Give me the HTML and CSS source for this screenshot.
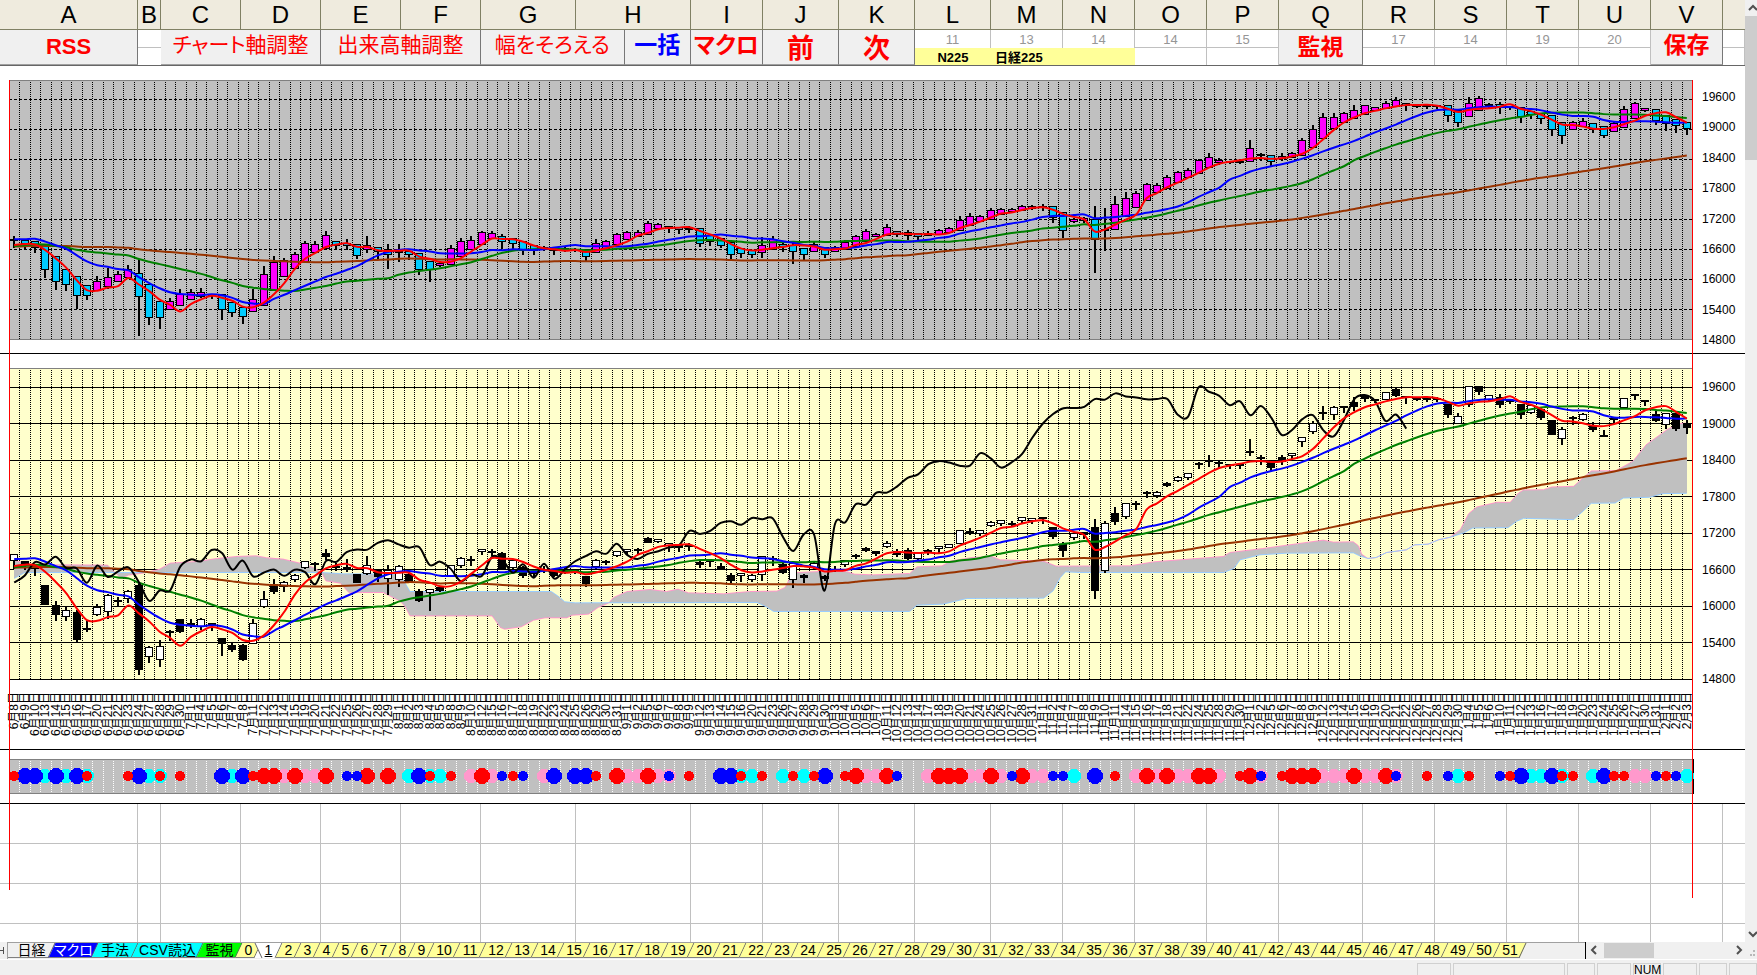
FILE: index.html
```html
<!DOCTYPE html>
<html lang="ja">

<head>
    <meta charset="UTF-8">
    <meta name="viewport" content="width=device-width, initial-scale=1.0">
    <title>日経225</title>
    <link rel="stylesheet" href="styles.css">
</head>

<body>
    <div class="book">
        <div class="sheet">
            <div class="cols head" id="head"></div>

            <div class="cols toolbar">
                <button class="tool rss">RSS</button>
                <span class="cell b"></span>
                <button class="tool thin wide">チャート軸調整</button>
                <button class="tool thin wide">出来高軸調整</button>
                <div class="pair">
                    <button class="tool thin fit">幅をそろえる</button>
                    <button class="tool blue all">一括</button>
                </div>
                <button class="tool">マクロ</button>
                <button class="tool big">前</button>
                <button class="tool big">次</button>
                <span class="cell code"><i>11</i><b>N225</b></span>
                <span class="cell code name"><i>13</i><b>日経225</b></span>
                <span class="cell code"><i>14</i><b></b></span>
                <span class="cell"><i>14</i><b></b></span>
                <span class="cell"><i>15</i><b></b></span>
                <button class="tool low">監視</button>
                <span class="cell"><i>17</i><b></b></span>
                <span class="cell"><i>14</i><b></b></span>
                <span class="cell"><i>19</i><b></b></span>
                <span class="cell"><i>20</i><b></b></span>
                <button class="tool">保存</button>
                <span class="cell"><i></i><b></b></span>
            </div>

            <div class="charts">
                <div class="panel average">
                    <svg class="plot" id="average"></svg>
                    <div class="scale" id="scale1"></div>
                </div>
                <div class="panel candle">
                    <svg class="plot" id="candle"></svg>
                    <div class="scale" id="scale2"></div>
                    <svg class="dates" id="dates"></svg>
                </div>
                <div class="panel signal">
                    <svg class="plot" id="signal"></svg>
                </div>
                <div class="mark left"></div>
                <div class="mark right"></div>
            </div>

            <div class="cols empty" id="empty"></div>
        </div>

        <div class="vscroll">
            <button aria-label="上へ"><svg viewBox="0 0 16 16"><path d="M4 10l4-4 4 4" /></svg></button>
            <div class="thumb"></div>
            <button aria-label="下へ"><svg viewBox="0 0 16 16"><path d="M4 6l4 4 4-4" /></svg></button>
        </div>
    </div>

    <div class="bottom">
        <button class="nav" aria-label="最後のシート"><svg viewBox="0 0 7 15"><path d="M0 7.500h3M3.500 4v7" /></svg></button>
        <div class="tabs" id="tabs">
            <button class="tab t1"><span>日経</span></button>
            <button class="tab t2"><span>マクロ</span></button>
            <button class="tab t3"><span>手法</span></button>
            <button class="tab t4"><span>CSV読込</span></button>
            <button class="tab t5"><span>監視</span></button>
        </div>
        <div class="hscroll">
            <button aria-label="左へ"><svg viewBox="0 0 16 16"><path d="M10 4l-4 4 4 4" /></svg></button>
            <div class="thumb"></div>
            <button aria-label="右へ"><svg viewBox="0 0 16 16"><path d="M6 4l4 4-4 4" /></svg></button>
        </div>
        <svg class="grip" viewBox="0 0 10 16"><path d="M6 9h2M3 13h2M6 13h2" /></svg>
    </div>

    <div class="status">
        <span class="s34"></span>
        <span class="s112"></span>
        <span class="s28"></span>
        <span class="s34"></span>
        <span class="s28">NUM</span>
        <span class="s34"></span>
        <span class="s28"></span>
        <span class="s28"></span>
    </div>

    <script src="script.js"></script>
</body>

</html>
```

FILE: styles.css
```css
* {
    box-sizing: border-box;
}

body {
    margin: 0;
    height: 100vh;
    display: flex;
    flex-direction: column;
    overflow: hidden;
    background-color: #fff;
    color: #000;
    font-family: "Liberation Sans", "Noto Sans CJK JP", sans-serif;
    font-feature-settings: "palt";
}

button {
    font: inherit;
    font-feature-settings: inherit;
    border: none;
    padding: 0;
    cursor: pointer;
}

i,
b {
    font-style: normal;
    font-weight: normal;
}

.book {
    flex: 1;
    min-height: 0;
    display: flex;
}

.sheet {
    flex: 1;
    min-width: 0;
    display: flex;
    flex-direction: column;
}

/* One column set for the header, the buttons and the cells */
.cols {
    display: grid;
    grid-template-columns: 138fr 23fr 80fr 80fr 80fr 80fr 95fr 115fr 72fr 76fr 76fr 76fr 72fr 72fr 72fr 72fr 84fr 72fr 72fr 72fr 72fr 72fr 22fr;
}

.head {
    height: 30px;
    background-color: #efebde;
    border-bottom: 1px solid #808064;
    font-size: 24px;
    line-height: 30px;
    text-align: center;
}

.head span {
    border-right: 1px solid #808064;
    min-width: 0;
}

.head span:last-child {
    border-right: none;
}

.toolbar {
    height: 36px;
    border-bottom: 1px solid #666;
}

.tool {
    background-color: #f0f0f0;
    border-right: 1px solid #777;
    border-bottom: 1px solid #a0a0a0;
    color: #f00;
    font-size: 23px;
    font-weight: bold;
    line-height: 28px;
    white-space: nowrap;
    min-width: 0;
    padding-bottom: 4px;
}

.thin {
    font-size: 21px;
    font-weight: normal;
}

.wide {
    grid-column: span 2;
}

.pair {
    grid-column: span 2;
    display: flex;
}

.fit {
    flex: 144;
}

.all {
    flex: 66;
}

.blue {
    color: #00f;
}

.big {
    font-size: 27px;
    padding: 4px 0 0;
}

.low {
    padding: 0;
}

.rss {
    font-size: 22px;
    padding: 0;
}

.cell {
    display: grid;
    grid-template-rows: 18px 17px;
    border-right: 1px solid #c0c0c0;
    text-align: center;
}

.cell i {
    border-bottom: 1px solid #c0c0c0;
    color: #969696;
    font-size: 13px;
    line-height: 20px;
}

.cell b {
    font-size: 13px;
    font-weight: bold;
    line-height: 20px;
}

.b {
    background: linear-gradient(#c0c0c0, #c0c0c0) 0 17px / 100% 1px no-repeat;
    border-right: none;
}

.code {
    border-right: none;
}

.code i {
    border-bottom: none;
    border-right: 1px solid #c0c0c0;
}

.code b {
    background-color: #ff9;
}

.name b {
    text-align: left;
    padding-left: 4px;
}

.charts {
    position: relative;
}

.panel {
    display: grid;
    grid-template-columns: 1fr 53px;
    padding-left: 9px;
    border-bottom: 1px solid #000;
}

.average {
    height: 288px;
    padding-top: 14px;
}

.candle {
    height: 396px;
    padding-top: 14px;
    grid-template-rows: 312px 1fr;
}

.signal {
    height: 54px;
    padding-top: 9px;
}

.plot {
    display: block;
    width: 100%;
    height: 311px;
    overflow: visible;
    shape-rendering: crispEdges;
}

.average .plot {
    height: 259px;
}

.signal .plot {
    height: 35px;
}

.dates {
    width: 100%;
    height: 68px;
    overflow: visible;
    font-size: 12px;
    font-feature-settings: normal;
}

.scale {
    display: flex;
    flex-direction: column;
    justify-content: space-between;
    padding-left: 10px;
    font-size: 12px;
    line-height: 12px;
}

.average .scale {
    height: 266px;
    padding-top: 11px;
}

.candle .scale {
    height: 317px;
    padding-top: 13px;
}

.mark {
    position: absolute;
    top: 14px;
    width: 1px;
    height: 810px;
    background-color: #f00;
}

.left {
    left: 9px;
}

.right {
    right: 52px;
    height: 818px;
}

/* Chart parts */
.bg-average,
.bg-signal,
.cloud {
    fill: #c0c0c0;
}

.bg-candle {
    fill: #ffc;
}

.line {
    fill: none;
    stroke-width: 2;
    shape-rendering: auto;
}

.ma5 {
    stroke: #f00;
}

.ma13 {
    stroke: #00f;
}

.ma25 {
    stroke: #008000;
}

.ma75 {
    stroke: #930;
}

.chikou {
    stroke: #000;
}

.span-a {
    stroke: #f9c;
    stroke-width: 1;
}

.span-b {
    stroke: #9cf;
    stroke-width: 1;
}

.grid-v {
    stroke: #000;
    stroke-dasharray: 1 1;
}

.grid-w {
    stroke: #fff;
    stroke-dasharray: 1 1;
}

.grid-h {
    stroke: #000;
}

.grid-d {
    stroke: #000;
    stroke-dasharray: 3 2;
}

.frame {
    stroke: #808080;
}

.wick {
    stroke: #000;
    stroke-width: 2;
}

.body {
    stroke: #000;
}

.average .up {
    fill: #f0f;
}

.average .down {
    fill: #0cf;
}

.candle .up {
    fill: #fff;
}

.candle .down {
    fill: #000;
}

.red {
    fill: #f00;
}

.navy {
    fill: #00f;
}

.cyan {
    fill: #0ff;
}

.pink {
    fill: #f9c;
}

.empty {
    flex: 1;
    min-height: 0;
    background: repeating-linear-gradient(#fff 0 39px, #c0c0c0 39px 40px);
}

.empty span {
    border-right: 1px solid #c0c0c0;
}

.empty span:last-child {
    border-right: none;
}

/* Scroll bars */
.vscroll {
    width: 12px;
    display: flex;
    flex-direction: column;
    background-color: #f0f0f0;
    overflow: hidden;
}

.vscroll button,
.hscroll button {
    width: 16px;
    height: 16px;
    background: none;
    flex: none;
}

.vscroll svg,
.hscroll svg,
.nav svg,
.grip {
    display: block;
    fill: none;
    stroke: #505050;
    stroke-width: 2;
}

.vscroll .thumb {
    height: 144px;
    margin-bottom: auto;
    background-color: #cdcdcd;
}

.bottom {
    height: 17px;
    display: flex;
    background-color: #f0f0f0;
    font-size: 14px;
}

.nav {
    width: 8px;
    background: none;
    border-right: 1px solid #a0a0a0;
}

.nav svg {
    width: 7px;
    height: 15px;
    stroke-width: 1;
}

.tabs {
    flex: 1;
    display: flex;
    height: 16px;
    padding-left: 3px;
    border-top: 1px solid #a0a0a0;
    overflow: hidden;
}

.tab {
    position: relative;
    width: 26px;
    height: 15px;
    background: none;
    line-height: 15px;
    white-space: nowrap;
    flex: none;
    color: #000;
    --tab: #ff9;
}

.tab::before {
    content: "";
    position: absolute;
    inset: 0;
    background-color: var(--tab);
    border-right: 1px solid #606060;
    border-bottom: 1px solid #808080;
    transform: skewX(-25deg);
}

.tab span {
    position: relative;
}

.one {
    width: 19px;
}

.t1 {
    width: 41px;
    --tab: #f0f0f0;
}

.t2 {
    width: 43px;
    color: #fff;
    --tab: #00f;
}

.t3 {
    width: 40px;
    --tab: #0ff;
}

.t4 {
    width: 65px;
    --tab: #0ff;
}

.t5 {
    width: 39px;
    --tab: #0f0;
}

.active {
    width: 21px;
    --tab: #fff;
}

.active::before {
    border-bottom: none;
}

.active::after {
    content: "";
    position: absolute;
    inset: 0 8px 0 0;
    background-color: #fff;
    border-left: 1px solid #606060;
    transform: skewX(25deg);
}

.active span {
    z-index: 1;
    text-decoration: underline;
}

.hscroll {
    width: 162px;
    display: flex;
    border-left: 1px solid #000;
}

.hscroll .thumb {
    width: 50px;
    height: 15px;
    margin: 1px auto 0 2px;
    background-color: #cdcdcd;
}

.grip {
    width: 10px;
    height: 16px;
    stroke: #b8b8b8;
}

.status {
    height: 16px;
    display: flex;
    justify-content: flex-end;
    gap: 2px;
    padding-top: 3px;
    background-color: #f0f0f0;
    border-top: 1px solid #fff;
    font-size: 12px;
    line-height: 12px;
    text-align: center;
}

.status span {
    height: 12px;
    border: 1px solid #d0d0d0;
    border-bottom: none;
}

.s28 {
    width: 28px;
}

.s34 {
    width: 34px;
}

.s112 {
    width: 112px;
}
```

FILE: script.js
```js
const SVG = "http://www.w3.org/2000/svg"

const months = {
    6: "8 9 10 13 14 15 16 17 20 21 22 23 24 27 28 29 30",
    7: "1 4 5 6 7 8 11 12 13 14 15 19 20 21 22 25 26 27 28 29",
    8: "1 2 3 4 5 8 9 10 12 15 16 17 18 19 22 23 24 25 26 29 30 31",
    9: "1 2 5 6 7 8 9 12 13 14 15 16 20 21 23 26 27 28 29 30",
    10: "3 4 5 6 7 11 12 13 14 17 18 19 20 21 24 25 26 27 28 31",
    11: "1 2 4 7 8 9 10 11 14 15 16 17 18 21 22 24 25 28 29 30",
    12: "1 2 5 6 7 8 9 12 13 14 15 16 19 20 21 22 26 27 28 29 30",
    1: "4 5 6 10 11 12 13 16 17 18 19 20 23 24 25 26 27 30 31",
    2: "1 2 3"
}

// Closes before the first day, for the moving averages
const before = [
    16197, 15967, 16111, 16052, 15916, 16140, 16188, 16027, 16086, 16747, 16960, 17015, 16911, 16783, 16642,
    16852, 16939, 17234, 17117, 16974, 16936, 16725, 17049, 17001, 16892, 17003, 17134, 17104, 16879, 16759,
    16164, 16123, 15733, 15715, 15750, 15822, 15751, 15929, 16381, 16911, 16848, 16276, 16874, 16907, 17364,
    17572, 17439, 17353, 17290, 16666, 16147, 16107, 16216, 16565, 16579, 16646, 16412, 16466, 16653, 16645,
    16647, 16736, 16655, 16499, 16757, 16772, 16835, 17068, 17235, 16956, 16563, 16642, 16580, 16675
]

// open, high, low, close
const days = [
    [16740, 16830, 16600, 16831], [16720, 16740, 16590, 16668], [16640, 16690, 16500, 16601],
    [16325, 16330, 16010, 16019], [16000, 16080, 15760, 15859], [15820, 15990, 15750, 15920],
    [15880, 15930, 15395, 15434], [15630, 15770, 15580, 15600], [15850, 16040, 15840, 15965],
    [15895, 16200, 15780, 16169], [16090, 16150, 15990, 16066], [16120, 16270, 16050, 16238],
    [16333, 16389, 14865, 14952], [15165, 15340, 15070, 15309], [15115, 15440, 14990, 15323],
    [15550, 15610, 15420, 15567], [15765, 15790, 15560, 15576],
    [15700, 15780, 15640, 15682], [15660, 15800, 15610, 15776], [15700, 15700, 15590, 15669],
    [15460, 15460, 15180, 15379], [15350, 15410, 15240, 15276], [15345, 15370, 15100, 15107],
    [15370, 15790, 15390, 15709], [15985, 16240, 15960, 16096], [16340, 16450, 16190, 16231],
    [16310, 16410, 16235, 16386], [16420, 16530, 16400, 16498], [16630, 16740, 16600, 16723],
    [16690, 16730, 16570, 16682], [16860, 16940, 16750, 16810], [16640, 16700, 16580, 16627],
    [16620, 16780, 16560, 16620], [16510, 16520, 16380, 16383], [16530, 16830, 16510, 16665],
    [16580, 16600, 16390, 16477], [16440, 16680, 16180, 16569],
    [16430, 16680, 16320, 16636], [16510, 16540, 16370, 16391], [16230, 16280, 16060, 16083],
    [16220, 16270, 15920, 16255], [16290, 16330, 16230, 16254], [16500, 16660, 16490, 16651],
    [16650, 16800, 16630, 16765], [16750, 16830, 16650, 16735], [16890, 16940, 16840, 16920],
    [16890, 16940, 16820, 16870], [16850, 16880, 16590, 16597], [16620, 16780, 16570, 16746],
    [16620, 16660, 16460, 16486], [16540, 16600, 16470, 16546], [16590, 16650, 16540, 16598],
    [16560, 16600, 16470, 16497], [16560, 16620, 16530, 16597], [16580, 16610, 16530, 16556],
    [16480, 16500, 16320, 16361], [16640, 16770, 16600, 16737], [16720, 16760, 16680, 16725],
    [16830, 16890, 16800, 16887],
    [16890, 16940, 16850, 16927], [16900, 16950, 16850, 16926], [17100, 17130, 17030, 17038],
    [17050, 17100, 17030, 17082], [16990, 17020, 16890, 17012], [16980, 17000, 16880, 16959],
    [16990, 17040, 16900, 16966], [16700, 16740, 16630, 16673], [16740, 16780, 16640, 16729],
    [16640, 16700, 16600, 16614], [16500, 16540, 16380, 16405], [16490, 16550, 16400, 16519],
    [16420, 16530, 16400, 16492], [16510, 16820, 16410, 16808], [16770, 16830, 16660, 16754],
    [16680, 16730, 16530, 16545], [16430, 16690, 16290, 16684], [16490, 16530, 16370, 16465],
    [16620, 16720, 16610, 16694], [16480, 16510, 16410, 16450],
    [16570, 16650, 16560, 16599], [16670, 16750, 16640, 16736], [16830, 16850, 16770, 16819],
    [16940, 16970, 16890, 16899], [16880, 16900, 16820, 16860], [16970, 17070, 16960, 17025],
    [16880, 16930, 16810, 16840], [16900, 16950, 16750, 16774], [16780, 16880, 16760, 16856],
    [16880, 16930, 16840, 16900], [16930, 16980, 16870, 16964], [16960, 17010, 16950, 16999],
    [17020, 17240, 17020, 17236], [17210, 17290, 17160, 17185], [17190, 17250, 17150, 17234],
    [17310, 17390, 17300, 17365], [17340, 17400, 17310, 17392], [17350, 17390, 17310, 17336],
    [17390, 17450, 17370, 17446], [17390, 17450, 17350, 17425],
    [17430, 17470, 17340, 17442], [17280, 17290, 17100, 17135], [17000, 17050, 16800, 16905],
    [17120, 17200, 17090, 17177], [17200, 17220, 17100, 17171], [17280, 17430, 16110, 16252],
    [16570, 17390, 16550, 17344], [17520, 17620, 17330, 17375], [17460, 17700, 17430, 17673],
    [17680, 17720, 17580, 17668], [17850, 17890, 17780, 17862], [17810, 17890, 17780, 17863],
    [18010, 18040, 17960, 17967], [18050, 18130, 18030, 18106], [18110, 18190, 18070, 18163],
    [18340, 18370, 18260, 18333], [18390, 18480, 18280, 18381], [18340, 18380, 18250, 18357],
    [18310, 18330, 18260, 18307], [18320, 18350, 18260, 18308],
    [18530, 18746, 18460, 18513], [18430, 18480, 18320, 18426], [18355, 18380, 18220, 18275],
    [18430, 18480, 18320, 18361], [18460, 18497, 18420, 18497], [18700, 18780, 18620, 18765],
    [18860, 19040, 18830, 18996], [19180, 19280, 19050, 19155], [19140, 19280, 19050, 19251],
    [19270, 19284, 19180, 19254], [19330, 19430, 19210, 19274], [19430, 19440, 19350, 19401],
    [19370, 19400, 19330, 19392], [19390, 19510, 19380, 19495], [19550, 19590, 19430, 19444],
    [19440, 19430, 19320, 19428], [19400, 19410, 19370, 19397], [19380, 19450, 19360, 19403],
    [19400, 19440, 19360, 19402], [19301, 19301, 19090, 19145], [18997, 19176, 18991, 19114],
    [19298, 19594, 19277, 19594], [19602, 19615, 19470, 19521], [19393, 19472, 19354, 19454],
    [19414, 19484, 19255, 19301], [19360, 19402, 19325, 19365], [19300, 19300, 19070, 19135],
    [19174, 19299, 19156, 19287], [19219, 19255, 19061, 19095], [19038, 19043, 18812, 18814],
    [18753, 18941, 18650, 18894], [19082, 19122, 18982, 19072], [19060, 19176, 19039, 19138],
    [18938, 19024, 18867, 18891], [18794, 18895, 18783, 18788], [19067, 19092, 19005, 19058],
    [19261, 19405, 19260, 19402], [19455, 19487, 19389, 19467], [19368, 19370, 19295, 19369],
    [19147, 19200, 19030, 19041],
    [18968, 19170, 18916, 19148], [19150, 19160, 18870, 18915], [18990, 19050, 18830, 18918]
]

// Cloud edges as day number and price
const spanA = [
    [0, 16748], [2, 16671], [4, 16677], [9, 16671], [9.7, 16550], [10.3, 16457], [11, 16507], [12.7, 16550],
    [14, 16605], [15, 16704], [17.6, 16731], [19.5, 16780], [21.4, 16814], [23.3, 16825], [24.3, 16792],
    [25.9, 16770], [27.5, 16704], [28.8, 16633], [29.6, 16550], [30, 16414], [31.4, 16375], [32.2, 16222],
    [35.5, 16222], [37.1, 16085], [37.6, 16000], [38.1, 15838], [46, 15838], [46.8, 15647], [47.2, 15619],
    [48.8, 15658], [50, 15767], [51.1, 15806], [53.2, 15806], [53.7, 15849], [55.3, 15866], [56.2, 15975],
    [57.2, 16047], [57.7, 16140], [59, 16238], [61.2, 16271], [62.8, 16238], [63.9, 16277], [64.9, 16216],
    [68.3, 16200], [70.8, 16238], [73.4, 16244], [74.2, 16304], [74.7, 16468], [75.3, 16550], [77.6, 16567],
    [80.1, 16567], [80.9, 16523], [82.7, 16512], [86.2, 16534], [86.9, 16644], [89.3, 16660], [90.2, 16742],
    [92.2, 16797], [94.1, 16814], [94.9, 16759], [99.1, 16737], [100.3, 16655], [107.4, 16660], [109.7, 16726],
    [116.4, 16814], [117, 16879], [120.2, 16945], [126, 17082], [127, 17049], [128.9, 17055], [129.4, 16989],
    [129.7, 16852], [130.3, 16781], [131.1, 16797], [132.1, 16879], [134, 16923], [134.8, 17005], [136.1, 17016],
    [137.1, 17088], [138.2, 17129], [139.2, 17255], [140, 17518], [140.8, 17628], [142.7, 17704], [144, 17704],
    [144.8, 17858], [145.3, 17907], [147.2, 17912], [148, 17956], [150.1, 17967], [151, 18104], [151.8, 18219],
    [154.2, 18225], [155.8, 18378], [157.1, 18652], [159.1, 18899], [160.2, 18997], [161, 19008]
]
const spanB = [
    [0, 16452], [1, 16550], [29.6, 16550], [31.7, 16529], [37.1, 16523], [37.6, 16386], [38.1, 16238],
    [51.7, 16238], [52.4, 16156], [53, 16069], [54, 16052], [71.5, 16058], [72.4, 15986], [73.1, 15910],
    [86.2, 15910], [86.9, 16014], [89.4, 16030], [91.7, 16123], [99.1, 16129], [100, 16249], [100.7, 16468],
    [101.2, 16562], [102.6, 16550], [116.4, 16550], [117.4, 16616], [118, 16759], [119.9, 16841],
    [122.5, 16868], [128.9, 16874], [129.5, 16825], [130.3, 16781], [131.1, 16797], [132.1, 16879],
    [134, 16923], [134.8, 17005], [136.1, 17016], [137.1, 17088], [138.2, 17129], [139.5, 17200],
    [140.4, 17282], [143.8, 17288], [144.6, 17392], [145.3, 17441], [150.1, 17419], [151, 17556],
    [151.8, 17688], [154.1, 17693], [154.9, 17775], [157.4, 17786], [158.7, 17847], [161, 17852]
]

// R B: large, c p: middle, r b: small, x: c with r, y: p with b
const signals = "rBBcBcBx...rBcx.r...BcBrRRpRppR.bbR.R.cBxcr.pRpbrb.pB.BBr.RppRpy.r..BB" +
    "xcr.crcrB.rRppRb..pRRRppRpbRppbbc.B.r.pRpRppRRp.rRy.rRRRpppRppRy..r.bcr..brBccBxr.cBrrppbrbc"

const count = days.length
const closes = before.concat(days.map(d => d[3]))

const average = n => days.map((d, i) => {
    const end = before.length + i + 1
    return [i, closes.slice(end - n, end).reduce((a, b) => a + b) / n]
})

// Averaged candles for the upper chart
const averaged = () => {
    let open = days[0][0]
    let close = days[0][3]
    return days.map(([o, h, l, c], i) => {
        if (i > 0) open = (open + close) / 2
        close = (o + h + l + c) / 4
        return [open, Math.max(h, open, close), Math.min(l, open, close), close]
    })
}

const add = (svg, name, attrs, text) => {
    const el = document.createElementNS(SVG, name)
    for (const key in attrs) el.setAttribute(key, attrs[key])
    if (text) el.textContent = text
    svg.appendChild(el)
}

const curve = pts => {
    let d = `M${pts[0]}`
    for (let i = 0; i < pts.length - 1; i++) {
        const p0 = pts[i - 1] || pts[i]
        const p1 = pts[i]
        const p2 = pts[i + 1]
        const p3 = pts[i + 2] || p2
        d += `C${p1[0] + (p2[0] - p0[0]) / 6} ${p1[1] + (p2[1] - p0[1]) / 6} `
        d += `${p2[0] - (p3[0] - p1[0]) / 6} ${p2[1] - (p3[1] - p1[1]) / 6} ${p2[0]} ${p2[1]}`
    }
    return d
}

function drawPrices(id, top, data, gridClass, gridTop) {
    const svg = document.getElementById(id)
    svg.innerHTML = ""
    const w = svg.clientWidth
    const h = svg.clientHeight
    const step = w / count
    const x = i => (i + 0.5) * step
    const y = v => h - (v - 14800) / (top - 14800) * h
    const points = list => list.map(([i, v]) => [x(i), y(v)])

    add(svg, "rect", { class: "bg-" + id, width: w, height: h })
    for (let i = 1; i < count; i++) {
        const gx = Math.round(i * step) + 0.5
        add(svg, "path", { class: "grid-v", d: `M${gx} 0V${h}` })
    }
    for (let v = 15400; v <= 19600; v += 600) {
        const gy = Math.round(h - (v - 14800) / (gridTop - 14800) * h) + 0.5
        add(svg, "path", { class: gridClass, d: `M0 ${gy}H${w}` })
    }
    add(svg, "path", { class: "frame", d: `M0 0.5H${w}` })
    add(svg, "path", { class: id === "candle" ? "grid-h" : "frame", d: `M0 ${h + 0.5}H${w}` })

    if (id === "candle") {
        const a = points(spanA)
        const b = points(spanB)
        add(svg, "path", { class: "cloud", d: `M${a.join("L")}L${b.slice().reverse().join("L")}Z` })
        add(svg, "path", { class: "line span-a", d: `M${a.join("L")}` })
        add(svg, "path", { class: "line span-b", d: `M${b.join("L")}` })
    }

    data.forEach(([o, hi, lo, c], i) => {
        const cx = Math.round(x(i))
        const t = Math.round(y(Math.max(o, c)))
        const b = Math.round(y(Math.min(o, c)))
        add(svg, "path", { class: "wick", d: `M${cx} ${y(hi)}V${y(lo)}` })
        add(svg, "rect", {
            class: "body " + (c >= o ? "up" : "down"),
            x: cx - 3.5, y: t - 0.5, width: 7, height: Math.max(b - t, 1)
        })
    })

    add(svg, "path", { class: "line ma75", d: curve(points(average(75))) })
    add(svg, "path", { class: "line ma25", d: curve(points(average(25))) })
    add(svg, "path", { class: "line ma13", d: curve(points(average(13))) })
    if (id === "candle") {
        const late = days.slice(26, 161).map((d, i) => [i, d[3]])
        add(svg, "path", { class: "line chikou", d: curve(points(late)) })
    }
    add(svg, "path", { class: "line ma5", d: curve(points(average(5))) })
}

function drawDates() {
    const svg = document.getElementById("dates")
    svg.innerHTML = ""
    const step = svg.clientWidth / count
    let i = 0
    for (const m of [6, 7, 8, 9, 10, 11, 12, 1, 2]) {
        for (const d of months[m].split(" ")) {
            const cx = Math.round((i + 0.5) * step) + 4
            add(svg, "text", { "text-anchor": "end", transform: `translate(${cx} 12) rotate(-90)` }, `${m}月${d}日`)
            i++
        }
    }
}

function drawSignals() {
    const svg = document.getElementById("signal")
    svg.innerHTML = ""
    const w = svg.clientWidth
    const h = svg.clientHeight
    const step = w / count
    add(svg, "rect", { class: "bg-signal", width: w + 1, height: h })
    for (let i = 1; i < count; i++) {
        const gx = Math.round(i * step) + 0.5
        add(svg, "path", { class: "grid-w", d: `M${gx} 0V${h}` })
    }
    add(svg, "path", { class: "frame", d: `M0 0.5H${w + 1}M0 ${h - 0.5}H${w + 1}` })
    add(svg, "path", { class: "grid-h", d: `M${w + 1.5} 0V${h}` })

    const layers = [
        ["cx", 7, "cyan"], ["py", 7, "pink"], ["B", 8, "navy"], ["R", 8, "red"], ["rx", 5, "red"], ["by", 5, "navy"]
    ]
    for (const [keys, r, color] of layers) {
        [...signals].forEach((s, i) => {
            if (keys.includes(s)) add(svg, "circle", { class: color, cx: Math.round((i + 0.5) * step), cy: 17, r })
        })
    }
}

function draw() {
    drawPrices("average", 19925, averaged(), "grid-d", 19980)
    drawPrices("candle", 19912, days, "grid-h", 19912)
    drawDates()
    drawSignals()
}

for (const c of "ABCDEFGHIJKLMNOPQRSTUV ") {
    document.getElementById("head").innerHTML += `<span>${c}</span>`
    document.getElementById("empty").innerHTML += "<span></span>"
}

for (const id of ["scale1", "scale2"]) {
    for (let v = 19600; v >= 14800; v -= 600) document.getElementById(id).innerHTML += `<span>${v}</span>`
}

for (let n = 0; n <= 51; n++) {
    const kind = n === 1 ? " active" : n < 10 ? " one" : ""
    document.getElementById("tabs").innerHTML += `<button class="tab${kind}"><span>${n}</span></button>`
}

draw()
window.onresize = draw
```
